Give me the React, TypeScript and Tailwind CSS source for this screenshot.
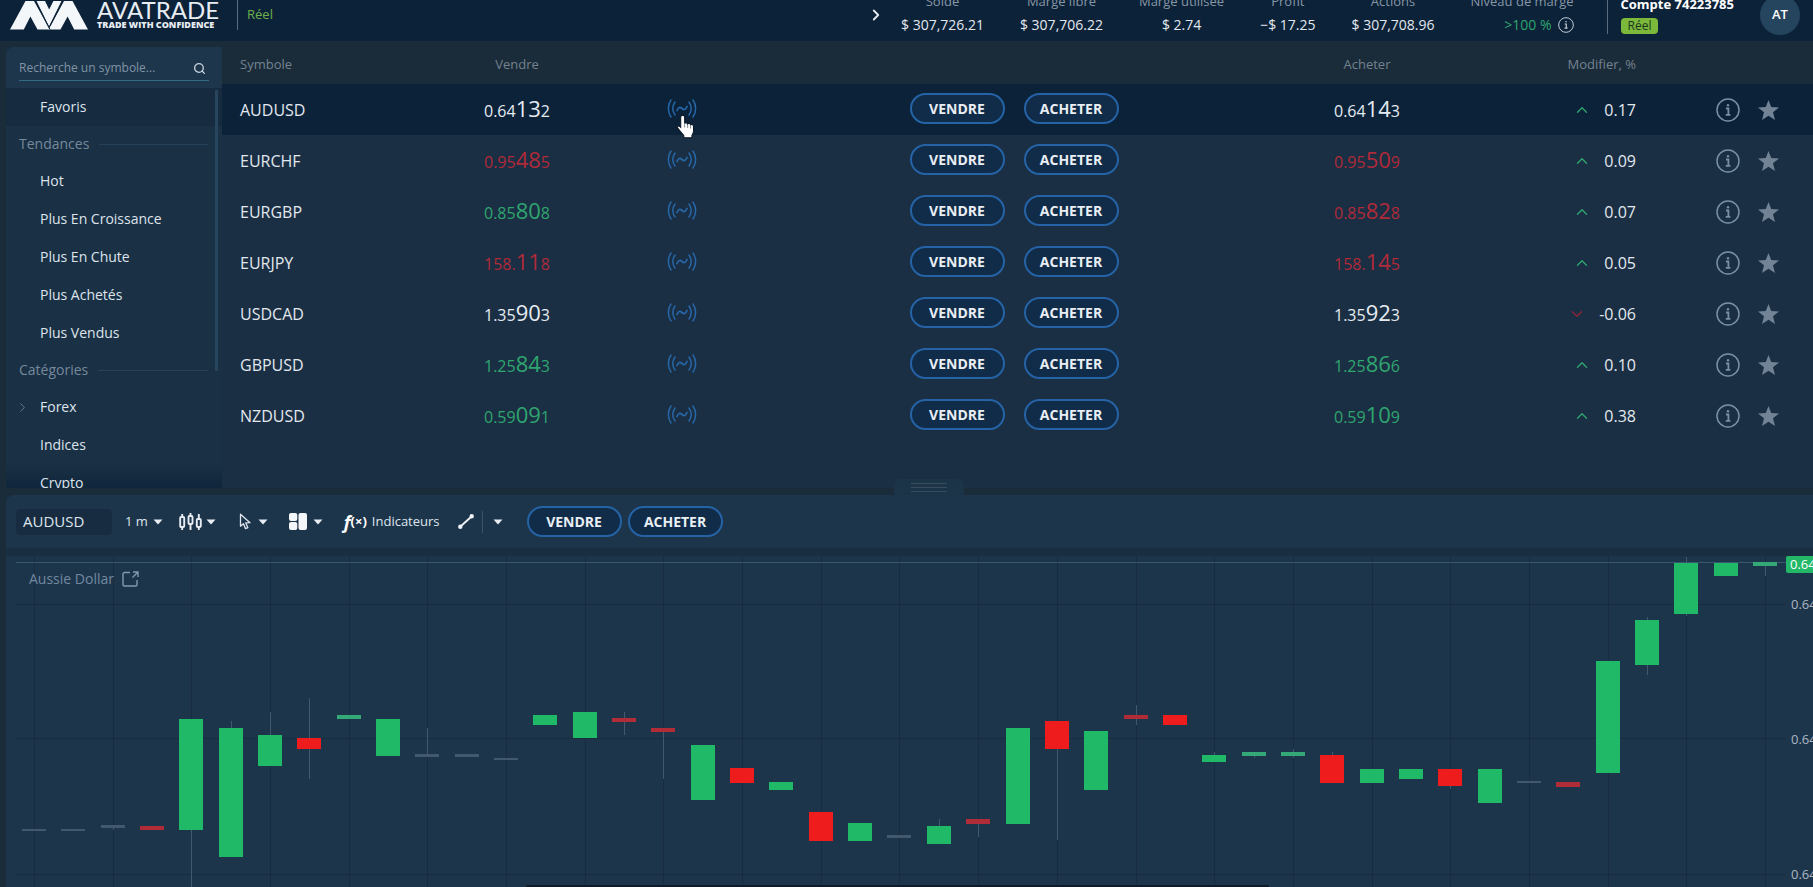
import type { ReactNode } from "react";
import { ChevronDown, ChevronRight, ChevronUp, Search } from "lucide-react";

type Tone = "flat" | "down" | "up";

interface Quote {
  symbol: string;
  sell: string;
  sellTone: Tone;
  buy: string;
  buyTone: Tone;
  change: string;
}

const quotes: Quote[] = [
  { symbol: "AUDUSD", sell: "0.64132", sellTone: "flat", buy: "0.64143", buyTone: "flat", change: "0.17" },
  { symbol: "EURCHF", sell: "0.95485", sellTone: "down", buy: "0.95509", buyTone: "down", change: "0.09" },
  { symbol: "EURGBP", sell: "0.85808", sellTone: "up", buy: "0.85828", buyTone: "down", change: "0.07" },
  { symbol: "EURJPY", sell: "158.118", sellTone: "down", buy: "158.145", buyTone: "down", change: "0.05" },
  { symbol: "USDCAD", sell: "1.35903", sellTone: "flat", buy: "1.35923", buyTone: "flat", change: "-0.06" },
  { symbol: "GBPUSD", sell: "1.25843", sellTone: "up", buy: "1.25866", buyTone: "up", change: "0.10" },
  { symbol: "NZDUSD", sell: "0.59091", sellTone: "up", buy: "0.59109", buyTone: "up", change: "0.38" },
];

const toneClass: Record<Tone, string> = {
  flat: "text-[#e6ebf2]",
  down: "text-[#b02a3a]",
  up: "text-[#2fa56f]",
};

const stats = [
  { label: "Solde", value: "$ 307,726.21" },
  { label: "Marge libre", value: "$ 307,706.22" },
  { label: "Marge utilisée", value: "$ 2.74" },
  { label: "Profit", value: "−$ 17.25" },
  { label: "Actions", value: "$ 307,708.96" },
];

const trends = ["Hot", "Plus En Croissance", "Plus En Chute", "Plus Achetés", "Plus Vendus"];

function Logo() {
  return (
    <div className="flex items-end gap-[9px]">
      <svg width="78" height="29" viewBox="0 0 78 29" fill="#f4f7fa" aria-hidden="true">
        <path d="M0 28.5 15.5 0H24L40 28.5H27.5L20.4 15.5 13.8 28.5Z" />
        <path d="M26.5 0H35L39.2 8.5 43.4 0H51.5L39 25.5Z" />
        <path d="M78 28.5 62.5 0H54L38.5 28.5H50.5L57.6 15.5 64.2 28.5Z" />
        <path d="M25.2 0 40 28.5" stroke="#0c2238" strokeWidth="1.1" fill="none" />
        <path d="M52.8 0 40 25" stroke="#0c2238" strokeWidth="1.1" fill="none" />
      </svg>
      <div className="flex flex-col whitespace-nowrap text-[#e8edf3]">
        <span className="font-['Lato',sans-serif] text-[24px] leading-5">AVATRADE</span>
        <span className="text-[9px] leading-[10px] font-extrabold">TRADE WITH CONFIDENCE</span>
      </div>
    </div>
  );
}

function InfoIcon({ size, color }: { size: number; color: string }) {
  return (
    <svg width={size} height={size} viewBox="0 0 24 24" fill="none" stroke={color} aria-hidden="true">
      <circle cx="12" cy="12" r="11" strokeWidth="1.5" />
      <path d="M10 10.5h2.4v6M9.8 16.8h4.6" strokeWidth="1.8" />
      <circle cx="12" cy="7.2" r="1.2" fill={color} stroke="none" />
    </svg>
  );
}

function SignalIcon() {
  return (
    <svg width="30" height="19" viewBox="0 0 30 19" fill="none" stroke="#2767a8" strokeWidth="1.5" strokeLinecap="round" aria-hidden="true">
      <path d="M4 1C.5 6 .5 13 4 18M8 3C5.3 7 5.3 12 8 16M26 1c3.500 5 3.500 12 0 17M22 3c2.700 4 2.700 9 0 13" />
      <path d="M10 11.500c1.500-3.500 3-3.800 5-2s3.500 1.500 5-2" strokeWidth="1.8" />
    </svg>
  );
}

function StarIcon() {
  return (
    <svg width="21" height="20" viewBox="0 0 21 20" fill="#718394" aria-hidden="true">
      <path d="M10.500 0 13.200 6.900 21 7.400 15 12.200 17 20 10.500 15.700 4 20 6 12.200 0 7.400 7.800 6.900Z" />
    </svg>
  );
}

function HandPointer() {
  return (
    <svg width="20" height="25" viewBox="0 0 19 24" className="absolute top-[30px] left-[51px]" aria-hidden="true">
      <path
        d="M6.300 1.200c1.200 0 1.900.8 1.900 2v6c.3-1 2.700-1 2.900.5.5-.9 2.600-.7 2.800.8.7-.7 2.800-.5 2.800 1.600v4.100c0 2-.8 3-1.500 4.300v2.200H7.400v-2C5.500 18 2.700 15.500 1.400 13.300c-.5-1 .7-2.300 2-1.400l1 .9V3.200c0-1.200.7-2 1.900-2Z"
        fill="#fff"
        stroke="#0a1724"
        strokeWidth="1"
      />
      <path d="M8.200 9v4M11.100 10v3.500M13.900 11v3" stroke="#6d7780" strokeWidth=".8" />
    </svg>
  );
}

function TradeButton({ children }: { children: ReactNode }) {
  return (
    <button
      type="button"
      className="h-[31px] w-[95px] rounded-full border-2 border-[#2563a6] bg-[#112c48] text-sm leading-none font-bold text-[#e9eef4]"
    >
      {children}
    </button>
  );
}

function Price({ value, tone }: { value: string; tone: Tone }) {
  return (
    <span className={`text-base leading-6 ${toneClass[tone]}`}>
      {value.slice(0, 4)}
      <span className="text-[22px]">{value.slice(4, 6)}</span>
      {value.slice(6)}
    </span>
  );
}

function Header() {
  return (
    <header className="flex h-[41px] shrink-0 items-end overflow-hidden bg-[#0c2238] pr-[13px] pl-[10px]">
      <div className="pb-[11px]">
        <Logo />
      </div>
      <div className="ml-[18px] flex h-[30px] items-center self-start border-l border-[#5a6b7c] pl-[9px] text-[13px] text-[#6fb04c]">Réel</div>
      <div className="ml-auto flex items-end gap-9">
        <button type="button" aria-label="Afficher plus" className="-mr-5 mb-[17px] text-[#e6ebf2]">
          <ChevronRight size={18} strokeWidth={2.4} />
        </button>
        {stats.map((s) => (
          <div key={s.label} className="flex flex-col items-center gap-1 pb-[6px] whitespace-nowrap">
            <span className="text-[13px] leading-5 text-[#8797a6]">{s.label}</span>
            <span className="text-sm leading-5 font-medium text-[#e3e8ef]">{s.value}</span>
          </div>
        ))}
        <div className="flex flex-col items-end gap-1 pb-[6px] whitespace-nowrap">
          <span className="text-[13px] leading-5 text-[#8797a6]">Niveau de marge</span>
          <span className="flex items-center gap-[6px] text-sm leading-5 text-[#2fa56f]">
            &gt;100 % <InfoIcon size={16} color="#c3ccd6" />
          </span>
        </div>
      </div>
      <div className="ml-[33px] h-[34px] w-px self-start bg-[#5a6b7c]" />
      <div className="ml-[13px] flex flex-col items-start gap-1 pb-[7px] whitespace-nowrap">
        <span className="text-[13px] leading-5 font-bold text-white">Compte 74223785</span>
        <span className="rounded bg-[#7cb83a] px-[7px] text-xs leading-4 text-[#17361f]">Réel</span>
      </div>
      <button type="button" className="mb-[6px] ml-[26px] size-10 shrink-0 rounded-full bg-[#25445d] text-[13px] font-semibold text-white">
        AT
      </button>
    </header>
  );
}

function Heading({ children }: { children: ReactNode }) {
  return (
    <div className="flex h-9 items-center gap-[10px] pr-[14px] pl-[13px] text-sm text-[#76899b]">
      {children}
      <span className="h-px flex-1 bg-[#25425a]" />
    </div>
  );
}

function Item({ children, className = "" }: { children: ReactNode; className?: string }) {
  return (
    <a href="#" className={`relative flex h-[38px] shrink-0 items-center pl-[34px] text-sm font-medium text-[#dde4ec] ${className}`}>
      {children}
    </a>
  );
}

function Sidebar() {
  return (
    <aside className="relative mt-[6px] ml-[6px] w-[216px] shrink-0 overflow-hidden rounded-tl-lg bg-[#1a3045]">
      <div className="h-[41px] bg-[#1d364c] px-[13px] pt-[9px]">
        <label className="flex h-[25px] items-center justify-between border-b border-[#2f6c86]">
          <input
            type="text"
            aria-label="Recherche un symbole"
            placeholder="Recherche un symbole..."
            className="min-w-0 flex-1 bg-transparent text-xs text-white outline-none placeholder:text-[#8093a4]"
          />
          <Search size={13} strokeWidth={2.4} className="mr-[3px] text-[#c9d3dd]" />
        </label>
      </div>
      <nav className="flex flex-col">
        <Item className="bg-[#162b40]">Favoris</Item>
        <Heading>Tendances</Heading>
        {trends.map((t) => (
          <Item key={t}>{t}</Item>
        ))}
        <Heading>Catégories</Heading>
        <Item>
          <ChevronRight size={15} strokeWidth={1.6} className="absolute left-[9px] text-[#64798c]" />
          Forex
        </Item>
        <Item>Indices</Item>
        <div className="bg-linear-to-b from-[#1a3045] to-[#0d2339] to-80%">
          <Item>Crypto</Item>
        </div>
      </nav>
      <div className="absolute top-[43px] right-[4px] h-[281px] w-[3px] bg-[#27455d]" />
    </aside>
  );
}

function Watchlist() {
  return (
    <div className="min-w-0 flex-1 bg-[#1a2f43]">
      <table className="w-full table-fixed border-collapse text-[#e3e8ef]">
        <colgroup>
          <col className="w-[187px]" />
          <col className="w-[216px]" />
          <col className="w-[113px]" />
          <col />
          <col className="w-[154px]" />
          <col className="w-[192px]" />
          <col className="w-[177px]" />
        </colgroup>
        <thead>
          <tr className="h-[43px] bg-[#1a2b39] text-[13px] text-[#74838f]">
            <th className="pt-1 pl-[18px] text-left font-normal">Symbole</th>
            <th className="pt-1 font-normal">Vendre</th>
            <th />
            <th />
            <th className="pt-1 font-normal">Acheter</th>
            <th className="pt-1 text-right font-normal">Modifier, %</th>
            <th />
          </tr>
        </thead>
        <tbody>
          {quotes.map((q, i) => (
            <tr key={q.symbol} className={i === 0 ? "h-[51px] bg-[#0b2239]" : "h-[51px]"}>
              <td className="p-0 pl-[18px] text-base">{q.symbol}</td>
              <td className="p-0 text-center">
                <Price value={q.sell} tone={q.sellTone} />
              </td>
              <td className="relative p-0 pb-[2px]">
                <div className="flex justify-center">
                  <SignalIcon />
                </div>
                {i === 0 && <HandPointer />}
              </td>
              <td className="p-0 pb-[2px]">
                <div className="flex justify-center gap-[19px]">
                  <TradeButton>VENDRE</TradeButton>
                  <TradeButton>ACHETER</TradeButton>
                </div>
              </td>
              <td className="p-0 text-center">
                <Price value={q.buy} tone={q.buyTone} />
              </td>
              <td className="p-0">
                <div className="flex items-center justify-end gap-[13px] text-base">
                  {q.change.startsWith("-") ? (
                    <ChevronDown size={18} strokeWidth={1.8} className="text-[#8e2436]" />
                  ) : (
                    <ChevronUp size={18} strokeWidth={1.8} className="text-[#2fa56f]" />
                  )}
                  {q.change}
                </div>
              </td>
              <td className="p-0">
                <div className="flex items-center justify-end gap-[18px] pr-[34px]">
                  <button type="button" aria-label={`Détails ${q.symbol}`}>
                    <InfoIcon size={24} color="#7790a4" />
                  </button>
                  <button type="button" aria-label={`Favori ${q.symbol}`}>
                    <StarIcon />
                  </button>
                </div>
              </td>
            </tr>
          ))}
        </tbody>
      </table>
    </div>
  );
}

function Caret() {
  return (
    <svg width="10" height="6" viewBox="0 0 10 6" fill="#e8edf3" aria-hidden="true">
      <path d="M.5.5h9L5 5.500Z" />
    </svg>
  );
}

function Toolbar() {
  return (
    <div className="flex h-[53px] items-center pl-[10px] text-[13px] text-[#dfe6ee]">
      <div className="flex h-[26px] w-[96px] items-center rounded bg-[#172c41] pl-[7px] text-[15px]">AUDUSD</div>
      <button type="button" className="ml-[13px] flex items-center gap-[5px]">
        1 m <Caret />
      </button>
      <button type="button" aria-label="Type de graphique" className="ml-4 flex items-center gap-1">
        <svg width="23" height="18" viewBox="0 0 23 18" fill="none" stroke="#e8edf3" strokeWidth="1.900" aria-hidden="true">
          <rect x="1.200" y="4" width="4" height="10" rx="1" />
          <path d="M3.200 1v3M3.200 14v3M11.500 0v3M11.500 11v6M19.800 1v5M19.800 14v3" />
          <rect x="9.500" y="3" width="4" height="8" rx="1" />
          <rect x="17.800" y="6" width="4" height="8" rx="1" />
        </svg>
        <Caret />
      </button>
      <button type="button" aria-label="Curseur" className="ml-[23px] flex items-center gap-[6px]">
        <svg width="13" height="17" viewBox="0 0 13 17" fill="none" stroke="#dfe6ee" strokeWidth="1.300" strokeLinejoin="round" aria-hidden="true">
          <path d="M1.500 1.200v12l3-2.500 2 5 2.400-1-2.100-4.800 4.200-.2Z" />
        </svg>
        <Caret />
      </button>
      <button type="button" aria-label="Disposition" className="ml-[21px] flex items-center gap-[6px]">
        <svg width="18" height="17" viewBox="0 0 18 17" fill="#f4f7fa" aria-hidden="true">
          <rect width="8.300" height="8" rx="2" />
          <rect y="9" width="8.300" height="8" rx="2" />
          <rect x="9.500" width="8.500" height="17" rx="2" />
        </svg>
        <Caret />
      </button>
      <button type="button" className="ml-[21px] flex items-center gap-[5px]">
        <span className="flex items-center font-bold text-white">
          <span className="text-[18px] leading-5 italic">f</span>
          <span>(×)</span>
        </span>
        Indicateurs
      </button>
      <button type="button" aria-label="Ligne de tendance" className="ml-[18px]">
        <svg width="16" height="15" viewBox="0 0 16 15" stroke="#f0f4f8" strokeWidth="1.800" fill="#f0f4f8" aria-hidden="true">
          <path d="M2.500 12.500 13.500 2.500" />
          <circle cx="2.300" cy="12.700" r="1.300" />
          <circle cx="13.700" cy="2.300" r="1.300" />
        </svg>
      </button>
      <span className="ml-2 h-[22px] w-px bg-[#3b5369]" />
      <button type="button" aria-label="Outils de dessin" className="ml-[10px]">
        <Caret />
      </button>
      <div className="ml-6 flex gap-[6px]">
        <TradeButton>VENDRE</TradeButton>
        <TradeButton>ACHETER</TradeButton>
      </div>
    </div>
  );
}

/* Each candle: kind, body top, body bottom, wick top, wick bottom. */
type Candle = ["g" | "r" | "n", number, number, number, number];

const candles: Candle[] = [
  ["n", 829, 831, 829, 831],
  ["n", 829, 831, 829, 831],
  ["n", 825, 828, 825, 830],
  ["r", 826, 830, 826, 830],
  ["g", 719, 830, 719, 887],
  ["g", 728, 857, 721, 857],
  ["g", 735, 766, 712, 766],
  ["r", 738, 749, 698, 779],
  ["g", 715, 719, 715, 719],
  ["g", 719, 756, 719, 756],
  ["n", 754, 757, 728, 756],
  ["n", 754, 757, 755, 757],
  ["n", 758, 760, 758, 760],
  ["g", 715, 725, 715, 725],
  ["g", 712, 738, 712, 738],
  ["r", 718, 722, 712, 735],
  ["r", 728, 732, 728, 779],
  ["g", 745, 800, 745, 800],
  ["r", 768, 783, 768, 783],
  ["g", 782, 790, 782, 790],
  ["r", 812, 841, 812, 841],
  ["g", 823, 841, 823, 841],
  ["n", 835, 838, 835, 838],
  ["g", 826, 844, 819, 844],
  ["r", 819, 824, 819, 837],
  ["g", 728, 824, 728, 824],
  ["r", 721, 749, 721, 840],
  ["g", 731, 790, 731, 790],
  ["r", 715, 719, 705, 725],
  ["r", 715, 725, 715, 725],
  ["g", 755, 762, 752, 762],
  ["g", 752, 756, 752, 758],
  ["g", 752, 756, 749, 758],
  ["r", 755, 783, 752, 783],
  ["g", 769, 783, 769, 783],
  ["g", 769, 779, 769, 779],
  ["r", 769, 786, 769, 789],
  ["g", 769, 803, 769, 803],
  ["n", 781, 783, 781, 783],
  ["r", 782, 787, 782, 787],
  ["g", 661, 773, 661, 773],
  ["g", 620, 665, 617, 675],
  ["g", 563, 614, 557, 616],
  ["g", 563, 576, 563, 576],
  ["g", 562, 566, 562, 576],
];

function bodyColor([kind, top, bottom]: Candle) {
  if (kind === "n") return "#41586d";
  const thin = bottom - top < 6;
  if (kind === "g") return thin ? "#35a877" : "#1fb967";
  return thin ? "#b02c36" : "#ee1c1c";
}

function Chart() {
  return (
    <svg viewBox="6 556 1807 331" className="block w-full" role="img" aria-label="Graphique AUDUSD" fontSize="13">
      {candles.map((_, i) =>
        i % 2 === 0 ? <rect key={i} x={Math.round(34 + i * 39.34)} y={556} width={1} height={331} fill="#182b3f" /> : null,
      )}
      {[604, 738, 874].map((y) => (
        <rect key={y} x={16} y={y} width={1769} height={1} fill="#182b3f" />
      ))}
      <rect x={16} y={562} width={1770} height={1} fill="#37586f" />
      {candles.map((c, i) => {
        const x = Math.round(34 + i * 39.34);
        return (
          <g key={i}>
            <rect x={x - 12} y={c[1]} width={24} height={c[2] - c[1]} fill={bodyColor(c)} />
            {c[3] < c[1] && <rect x={x} y={c[3]} width={1} height={c[1] - c[3]} fill="#41586d" />}
            {c[4] > c[2] && <rect x={x} y={c[2]} width={1} height={c[4] - c[2]} fill="#41586d" />}
          </g>
        );
      })}
      <rect x={1786} y={556} width={34} height={17} rx={2} fill="#22b868" />
      <text x={1790} y={569} fill="#ffffff">0.64143</text>
      <text x={1791} y={609} fill="#aab6c2">0.64140</text>
      <text x={1791} y={744} fill="#aab6c2">0.64130</text>
      <text x={1791} y={879} fill="#aab6c2">0.64120</text>
    </svg>
  );
}

function ChartPanel() {
  return (
    <section className="relative mt-[7px] ml-[6px] min-h-0 flex-1 rounded-tl-lg bg-[#1d354b]">
      <button
        type="button"
        aria-label="Redimensionner"
        className="absolute -top-4 left-1/2 -ml-4 flex h-4 w-[70px] flex-col items-center gap-[3px] rounded-t-md bg-[#1c3448] pt-1"
      >
        <span className="h-px w-9 bg-[#3a4c5c]" />
        <span className="h-px w-9 bg-[#3a4c5c]" />
        <span className="h-px w-9 bg-[#3a4c5c]" />
      </button>
      <Toolbar />
      <div className="h-2 bg-[#1a2e42]" />
      <div className="relative">
        <Chart />
        <div className="absolute top-[13px] left-[23px] flex items-center gap-2 text-sm text-[#7189a0]">
          Aussie Dollar
          <a href="#" aria-label="Ouvrir dans une nouvelle fenêtre">
            <svg width="17" height="16" viewBox="0 0 17 16" fill="none" stroke="#8299ab" strokeWidth="1.400" aria-hidden="true">
              <path d="M8 1.500H2.500a1.500 1.500 0 0 0-1.500 1.500v10.500A1.500 1.500 0 0 0 2.500 15h11a1.500 1.500 0 0 0 1.500-1.500V9M11 1h5v5M16 1l-5.500 5.500" />
            </svg>
          </a>
        </div>
      </div>
    </section>
  );
}

export default function App() {
  return (
    <div className="relative flex h-screen flex-col overflow-hidden bg-[#1a2b39] font-['Open_Sans','Noto_Sans',sans-serif]">
      <Header />
      <main className="flex min-h-0 flex-1 flex-col">
        <div className="flex h-[447px] shrink-0">
          <Sidebar />
          <Watchlist />
        </div>
        <ChartPanel />
      </main>
      <div className="absolute bottom-0 left-[29%] h-[2px] w-[41%] rounded-t-lg bg-[#0f1b28]" />
    </div>
  );
}
